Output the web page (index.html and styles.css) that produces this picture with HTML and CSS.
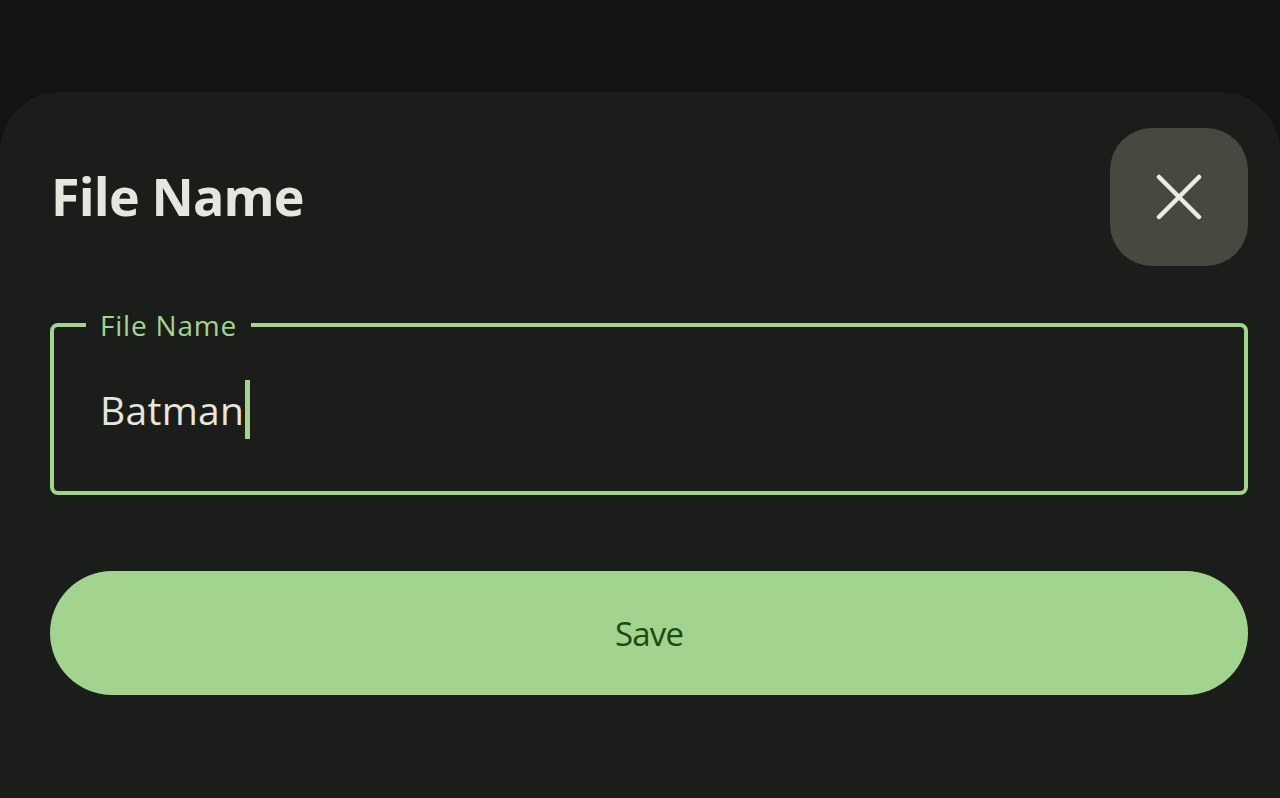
FILE: index.html
```html
<!DOCTYPE html>
<html lang="en">
<head>
  <meta charset="UTF-8">
  <meta name="viewport" content="width=device-width, initial-scale=1.0">
  <title>File Name</title>
  <link rel="stylesheet" href="styles.css">
</head>
<body>
  <div class="sheet">
    <div class="sheet-header">
      <h2>File Name</h2>
      <button class="close-btn" aria-label="Close">
        <svg width="46" height="46" viewBox="0 0 46 46">
          <path d="M3 3 L43 43 M43 3 L3 43" stroke="#ecebe4" stroke-width="4.5" stroke-linecap="round"/>
        </svg>
      </button>
    </div>

    <fieldset class="name-field">
      <legend>File Name</legend>
      <div class="name-input">Batman<span class="caret"></span></div>
    </fieldset>

    <button class="save-btn">Save</button>
  </div>
</body>
</html>
```

FILE: styles.css
```css
body {
  margin: 0;
  background-color: #131313;
  font-family: "Open Sans", "Noto Sans", sans-serif;
  height: 798px;
  overflow: hidden;
}

/* Bottom sheet */
.sheet {
  margin-top: 92px;
  background-color: #1b1d1a;
  border-radius: 60px 60px 0 0;
  padding: 36px 32px 0 50px;
  height: 706px;
  box-sizing: border-box;
}

.sheet-header {
  display: flex;
  align-items: center;
  justify-content: space-between;
  height: 138px;
}

.sheet-header h2 {
  margin: 0 0 4px 1px;
  font-size: 52px;
  font-weight: 700;
  color: #e6e6de;
  letter-spacing: -0.8px;
}

.close-btn {
  width: 138px;
  height: 138px;
  border: none;
  border-radius: 42px;
  background-color: #454940;
  display: flex;
  align-items: center;
  justify-content: center;
  padding: 0;
}

/* Outlined text field */
.name-field {
  margin: 44px 0 0 0;
  border: 4px solid #a2d48e;
  border-radius: 8px;
  padding: 0 32px 12px 32px;
}

.name-field legend {
  padding: 0 14px;
  font-size: 28px;
  line-height: 30px;
  letter-spacing: 0.8px;
  color: #a2d48e;
}

.name-input {
  display: flex;
  align-items: center;
  height: 139px;
  padding-left: 14px;
  font-size: 39px;
  letter-spacing: 0.3px;
  color: #e6e6de;
}

.caret {
  display: inline-block;
  width: 5px;
  height: 59px;
  margin-left: 1px;
  background-color: #a2d48e;
}

/* Save button */
.save-btn {
  display: block;
  width: 100%;
  height: 124px;
  margin-top: 76px;
  border: none;
  border-radius: 62px;
  background-color: #a3d48f;
  color: #1d4a10;
  font-family: "Open Sans", "Noto Sans", sans-serif;
  font-size: 33px;
  letter-spacing: -0.8px;
}
```
